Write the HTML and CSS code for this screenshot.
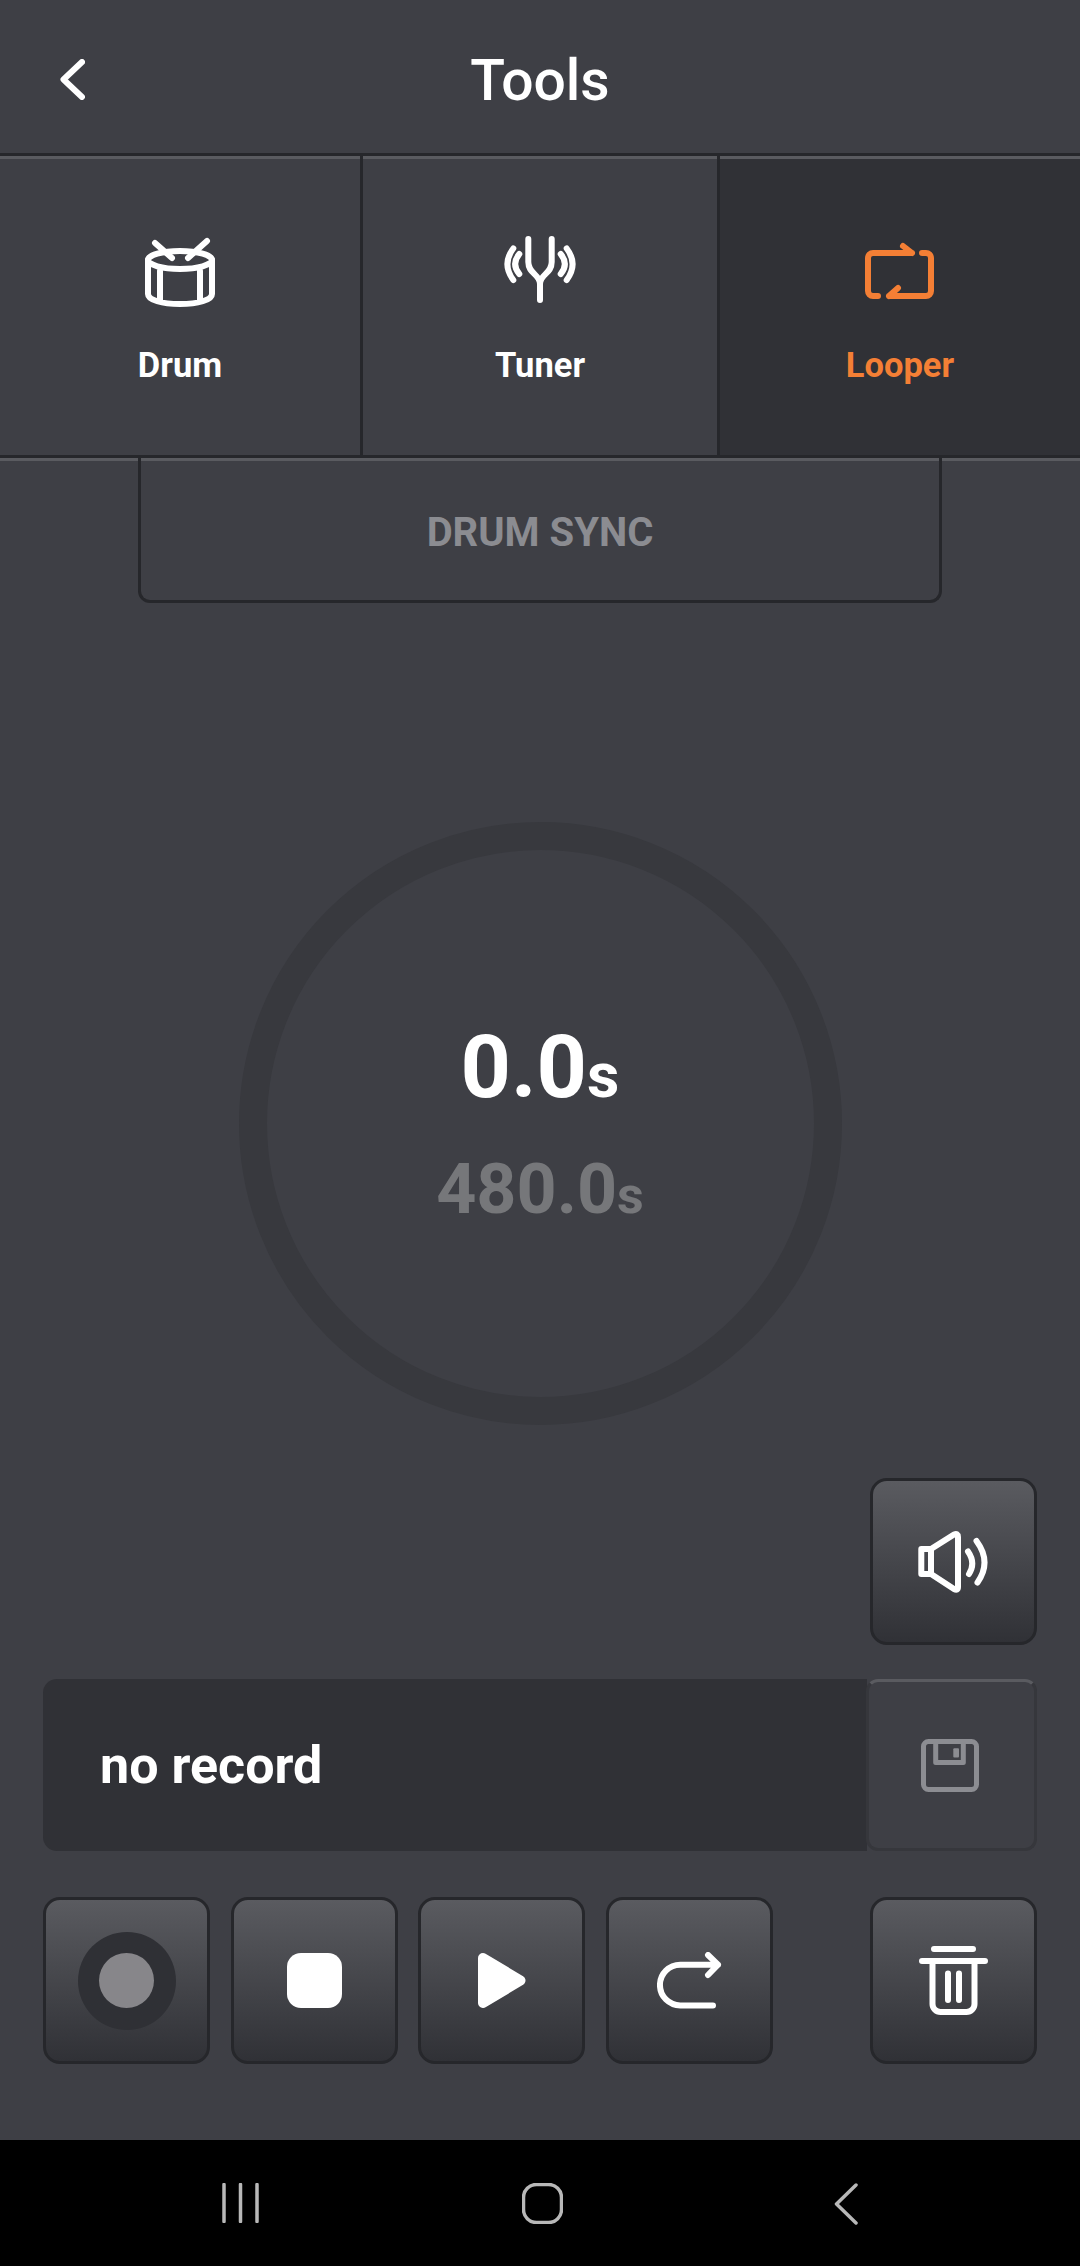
FILE: index.html
```html
<!DOCTYPE html>
<html lang="en">
<head>
<meta charset="utf-8">
<title>Tools</title>
<link rel="stylesheet" href="styles.css">
</head>
<body>
<div class="screen">
  <header class="topbar">
    <svg class="back" viewBox="0 0 25 41" width="25" height="41"><path d="M22 3 3.5 20.5 22 38"/></svg>
    <h1 class="title">Tools</h1>
  </header>
  <nav class="tabs">
    <div class="tab tab-first">
      <svg class="tab-icon" viewBox="-5 -2 80 72" width="80" height="72"><path d="M3 22V56C3 62 17 66 35 66S67 62 67 56V22M15 33V62M55 33V62"/><ellipse cx="35" cy="22" rx="32" ry="9"/><path d="M10 5 27 20M62 3 43 20"/></svg>
      <span class="tab-label">Drum</span>
    </div>
    <div class="tab tab-mid">
      <svg class="tab-icon" viewBox="-4 0 80 72" width="80" height="72"><path d="M24.3 3V26C24.3 38 36 38 36 48V64M47.7 3V26C47.7 38 36 38 36 48"/><path d="M9.3 12.5Q-2.500 28 9.3 44M15.3 18Q7 28 15.3 38M62.7 12.5Q74.500 28 62.7 44M56.7 18Q65 28 56.7 38"/></svg>
      <span class="tab-label">Tuner</span>
    </div>
    <div class="tab tab-on">
      <svg class="tab-icon" viewBox="-5 -7 80 72" width="80" height="72"><path d="M47 10H8A5 5 0 0 0 3 15V48A5 5 0 0 0 8 53H13M57 10H61A5 5 0 0 1 66 15V48A5 5 0 0 1 61 53H24M38 3 47 10M33 45 24 53"/></svg>
      <span class="tab-label">Looper</span>
    </div>
  </nav>
  <main class="main">
    <div class="sync">DRUM SYNC</div>
    <div class="dial">
      <div class="time"><span class="t-num">0.0</span><span class="t-unit">s</span></div>
      <div class="limit"><span class="l-num">480.0</span><span class="l-unit">s</span></div>
    </div>
    <div class="vol-row">
      <div class="btn">
        <svg class="ico" viewBox="0 0 71 62" width="71" height="62"><path d="M3.300 18H13L36 3.500Q40 2 40 6V56Q40 60 36 58L13 43H3.300ZM13 18V43"/><path d="M50 20.500Q58 32 51 43M58.500 10Q74 31 59.500 51.500"/></svg>
      </div>
    </div>
    <div class="record-row">
      <div class="record-name">no record</div>
      <div class="save">
        <svg class="save-ico" viewBox="0 0 58 53" width="58" height="53"><rect x="2.500" y="2.500" width="53" height="48" rx="5"/><path d="M14.700 3V23.600H42.300V3"/><rect class="save-tab" x="32.300" y="9.300" width="5.700" height="9.300" rx="1"/></svg>
      </div>
    </div>
    <div class="controls">
      <div class="btn"><div class="rec-ring"><div class="rec-dot"></div></div></div>
      <div class="btn"><div class="stop"></div></div>
      <div class="btn">
        <svg class="ico-fill" viewBox="0 0 48 55" width="48" height="55"><path d="M5 5 42.500 27.500 5 50Z"/></svg>
      </div>
      <div class="btn">
        <svg class="ico" viewBox="0 0 65 57" width="65" height="57"><path d="M61 12.700H23.300A20.350 20.350 0 0 0 23.300 53.400H56M51 3 61 12.700 51 23"/></svg>
      </div>
      <div class="btn btn-end">
        <svg class="ico" viewBox="0 0 69 69" width="69" height="69"><path d="M15 3H54M3 15H66M13.500 15V58A8 8 0 0 0 21.500 66H47.500A8 8 0 0 0 55.500 58V15M29 27.500V54M40 27.500V54"/></svg>
      </div>
    </div>
  </main>
  <footer class="sysnav">
    <svg class="sys sys-bars" viewBox="0 0 37 40" width="37" height="40"><path d="M2 1.500V38.500M18.500 1.500V38.500M35 1.500V38.500"/></svg>
    <svg class="sys sys-home" viewBox="0 0 41 41" width="41" height="41"><rect x="1.500" y="1.500" width="38" height="38" rx="13"/></svg>
    <svg class="sys sys-back" viewBox="0 0 24 42" width="24" height="42"><path d="M22 2 2.500 21 22 40"/></svg>
  </footer>
</div>
</body>
</html>
```
FILE: styles.css
```css
* { box-sizing: border-box; }
html, body { margin: 0; padding: 0; }
body { font-family: Roboto, "Liberation Sans", sans-serif; background: #000; }
.screen { width: 1080px; height: 2266px; display: flex; flex-direction: column; background: #3e3f45; color: #fff; overflow: hidden; }

.topbar { height: 153px; flex: none; display: flex; align-items: center; justify-content: center; position: relative; }
.back { position: absolute; left: 60px; top: 59px; fill: none; stroke: #fff; stroke-width: 6; stroke-linecap: round; stroke-linejoin: round; }
.title { margin: 0; font-size: 57px; font-weight: 500; line-height: 66px; position: relative; top: 4px; }

.tabs { height: 305px; flex: none; display: flex; }
.tab { display: flex; flex-direction: column; align-items: center; height: 305px; padding-top: 80px; border-top: 3px solid #26272b; border-bottom: 3px solid #26272b; box-shadow: inset 0 3px 0 #5a5b60; }
.tab-first { width: 363px; border-right: 3px solid #26272b; }
.tab-mid { width: 357px; border-right: 3px solid #26272b; }
.tab-on { width: 360px; background: #303136; color: #f47f35; }
.tab-icon { display: block; fill: none; stroke: currentColor; stroke-width: 6; stroke-linecap: round; stroke-linejoin: round; }
.tab-label { margin-top: 36px; font-size: 34.5px; font-weight: 700; line-height: 42px; }

.main { flex: 1; display: flex; flex-direction: column; padding: 0 43px; border-top: 3px solid #5a5b60; }
.sync { width: 804px; height: 145px; margin-top: -3px; padding-top: 6px; align-self: center; flex: none; display: flex; align-items: center; justify-content: center; border: 3px solid #26272b; border-top: 0; border-radius: 0 0 12px 12px; box-shadow: inset 0 3px 0 #5a5b60; color: #8b8c91; font-size: 40px; font-weight: 700; }
.dial { width: 603px; height: 603px; flex: none; margin-top: 219px; align-self: center; border: 28px solid #38393e; border-radius: 50%; display: flex; flex-direction: column; align-items: center; padding-top: 167px; }
.time { font-weight: 700; line-height: 100px; }
.t-num { font-size: 88px; }
.t-unit { font-size: 63px; }
.limit { color: #76777a; font-weight: 700; line-height: 80px; margin-top: 7px; }
.l-num { font-size: 70px; }
.l-unit { font-size: 52px; }

.vol-row { display: flex; justify-content: flex-end; margin-top: 53px; flex: none; }
.btn { width: 167px; height: 167px; flex: none; display: flex; align-items: center; justify-content: center; border: 3px solid #26272b; border-radius: 17px; background: linear-gradient(#5a5b60, #45464b 50%, #303136); }
.ico { display: block; fill: none; stroke: #fff; stroke-width: 6; stroke-linecap: round; stroke-linejoin: round; }
.ico-fill { display: block; fill: #fff; stroke: #fff; stroke-width: 10; stroke-linejoin: round; }

.record-row { display: flex; height: 172px; margin-top: 34px; flex: none; }
.record-name { flex: 1; display: flex; align-items: center; padding-left: 57px; background: #303136; border-radius: 14px 0 0 14px; font-size: 52px; font-weight: 700; }
.save { width: 171px; flex: none; display: flex; align-items: center; justify-content: center; padding-right: 3px; border: 3px solid #36373c; border-top: 3px solid #5a5b60; border-radius: 12px; margin-left: -1px; }
.save-ico { display: block; fill: none; stroke: #8c8d92; stroke-width: 5; stroke-linejoin: round; }
.save-tab { fill: #8c8d92; stroke: none; }

.controls { display: flex; gap: 20.5px; margin-top: 46px; flex: none; }
.btn-end { margin-left: auto; }
.rec-ring { width: 98px; height: 98px; border-radius: 50%; background: #2f3035; display: flex; align-items: center; justify-content: center; }
.rec-dot { width: 55px; height: 55px; border-radius: 50%; background: #87868a; }
.stop { width: 55px; height: 55px; border-radius: 14px; background: #fff; }

.sysnav { height: 126px; flex: none; background: #000; display: flex; align-items: flex-start; padding: 43px 0 0 222px; }
.sys { display: block; fill: none; stroke: #b8b8b8; stroke-linecap: round; stroke-linejoin: round; stroke-width: 3.500; }
.sys-home { margin-left: 263px; }
.sys-back { margin-left: 271px; }
```
